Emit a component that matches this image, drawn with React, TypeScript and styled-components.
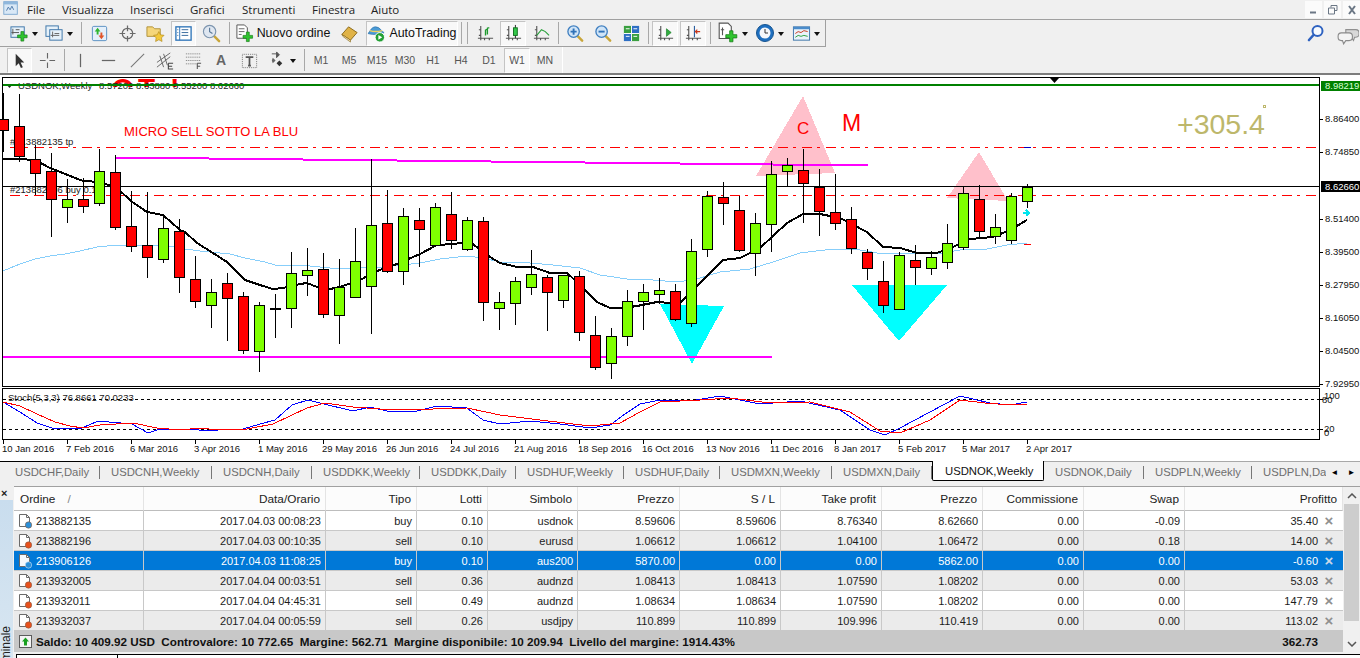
import React from "react";
import styled, { createGlobalStyle } from "styled-components";

const UI = `"Liberation Sans", Arial, sans-serif`;

const GlobalStyle = createGlobalStyle`
  html, body { margin: 0; padding: 0; background: #f0f0f0; }
  body { font-family: ${UI}; font-size: 11px; color: #1c1c1c; overflow: hidden; }
`;

const Page = styled.div`
  width: 1360px;
  height: 658px;
  display: flex;
  flex-direction: column;
  overflow: hidden;
  background: #f0f0f0;
`;

/* ---------- menu ---------- */
const MenuBar = styled.div`
  height: 19px;
  flex: none;
  display: flex;
  align-items: center;
  border-bottom: 1px solid #a0a0a0;
  padding-left: 2px;
  font-family: "Open Sans", sans-serif;
  font-size: 11.5px;
`;
const MenuItem = styled.span<{ $w: number }>`
  width: ${(p) => p.$w}px;
  color: #222;
  white-space: nowrap;
`;
const WindowButtons = styled.div`
  margin-left: auto;
  display: flex;
  gap: 2px;
  align-items: center;
`;
const WindowButton = styled.div`
  width: 17px;
  height: 17px;
  background: #fbfbfb;
  display: flex;
  align-items: center;
  justify-content: center;
`;

/* ---------- toolbars ---------- */
const ToolRow = styled.div<{ $thick?: boolean }>`
  height: ${(p) => (p.$thick ? 26 : 27)}px;
  flex: none;
  display: flex;
  justify-content: space-between;
  border-bottom: ${(p) => (p.$thick ? "2px solid #7d7d7d" : "none")};
`;
const ToolGroup = styled.div<{ $w: number; $strong?: boolean }>`
  width: ${(p) => p.$w}px;
  display: flex;
  align-items: center;
  padding-left: 6px;
  box-sizing: border-box;
  border-right: 1px solid ${(p) => (p.$strong ? "#a0a0a0" : "#fff")};
  border-bottom: ${(p) => (p.$strong ? "1px solid #a0a0a0" : "none")};
`;
const ToolButton = styled.div<{ $w: number; $on?: boolean }>`
  width: ${(p) => p.$w}px;
  height: 25px;
  flex: none;
  box-sizing: border-box;
  display: flex;
  align-items: center;
  justify-content: center;
  gap: 3px;
  color: #111;
  font-size: 12.4px;
  ${(p) =>
    p.$on
      ? `border: 1px solid #c4c4c4; border-right-color: #fff; border-bottom-color: #fff; background: #f8f8f8; margin: 0 1px; width: ${p.$w - 2}px;`
      : ""}
`;
const PeriodButton = styled(ToolButton)`
  font-size: 10.5px;
  color: #555;
`;
const LetterButton = styled(ToolButton)`
  font-size: 14px;
  font-weight: 700;
  color: #666;
`;
const ToolSep = styled.div<{ $w: number }>`
  width: ${(p) => p.$w}px;
  flex: none;
  height: 22px;
  display: flex;
  justify-content: center;
  &::before {
    content: "";
    width: 1px;
    background: #a8a8a8;
  }
`;
const Caret = styled.span`
  width: 0;
  height: 0;
  border: 3px solid transparent;
  border-top: 4px solid #111;
  margin-top: 4px;
`;
const RightIcons = styled.div`
  display: flex;
  gap: 11px;
  align-items: center;
  padding-right: 1px;
`;

/* ---------- chart ---------- */
const ChartSvg = styled.svg`
  display: block;
  flex: none;
  width: 1360px;
  height: 386px;
  background: #fff;
  font-family: ${UI};
  font-size: 9.5px;
`;

type Candle = [number, number, number, number, "r" | "g" | "d"];
const CANDLES: Candle[] = [
  [93, 119, 130, 152, "r"], [94, 126, 156, 162, "r"], [145, 159, 173, 195, "r"], [153, 171, 199, 237, "r"],
  [179, 199, 207, 223, "g"], [178, 199, 206, 213, "r"], [149, 171, 203, 206, "g"], [155, 172, 227, 230, "r"],
  [191, 226, 246, 252, "r"], [192, 245, 257, 278, "r"], [215, 228, 259, 263, "g"], [219, 231, 277, 293, "r"],
  [256, 279, 301, 308, "r"], [279, 292, 305, 328, "g"], [273, 283, 298, 341, "r"], [292, 296, 350, 354, "r"],
  [302, 305, 351, 372, "g"], [294, 308, 308, 338, "d"], [252, 273, 308, 328, "g"], [248, 270, 275, 296, "g"],
  [253, 269, 314, 318, "r"], [259, 287, 315, 344, "g"], [228, 261, 297, 298, "g"], [159, 225, 286, 334, "g"],
  [190, 223, 271, 273, "r"], [208, 216, 271, 285, "g"], [208, 220, 229, 267, "r"], [203, 207, 245, 245, "g"],
  [192, 214, 240, 249, "r"], [217, 220, 249, 251, "g"], [217, 221, 302, 321, "r"], [292, 302, 308, 330, "g"],
  [277, 281, 303, 325, "g"], [250, 274, 287, 295, "g"], [275, 277, 292, 331, "r"], [275, 275, 300, 308, "g"],
  [271, 276, 332, 341, "r"], [316, 335, 367, 370, "r"], [328, 336, 363, 379, "g"], [290, 301, 336, 346, "g"],
  [284, 292, 301, 330, "g"], [278, 290, 294, 304, "g"], [284, 291, 319, 321, "r"], [239, 251, 323, 327, "g"],
  [191, 196, 249, 257, "g"], [182, 197, 203, 225, "r"], [196, 210, 250, 252, "r"], [213, 223, 253, 276, "g"],
  [161, 174, 224, 252, "g"], [158, 165, 171, 186, "g"], [149, 170, 183, 223, "r"], [169, 187, 211, 236, "r"],
  [174, 212, 223, 230, "r"], [207, 219, 248, 254, "r"], [249, 252, 268, 280, "r"], [261, 281, 305, 313, "r"],
  [252, 255, 309, 309, "g"], [245, 260, 267, 285, "r"], [251, 257, 268, 275, "g"], [224, 243, 262, 269, "g"],
  [187, 193, 247, 250, "g"], [185, 199, 231, 238, "r"], [214, 227, 236, 244, "g"], [193, 196, 240, 244, "g"],
  [184, 187, 201, 208, "g"],
];
const MA_FAST =
  "3,159 19,159 35,160 50,168 83,181 100,182 117,188 131,201 147,212 163,215 180,230 185,232 197,243 213,253 227,262 245,280 263,286 273,289 283,288 300,284 307,283 317,287 330,289 340,287 360,280 377,271 397,264 420,254 437,245 453,244 470,242 490,257 500,263 517,267 533,267 550,273 567,273 577,282 597,302 610,308 623,308 637,306 657,302 670,303 680,303 693,290 723,260 740,258 760,248 787,223 803,214 820,214 840,218 867,232 883,247 900,248 917,253 937,253 953,247 970,239 993,237 1010,230 1027,220";
const MA_SLOW =
  "3,271 10,268 20,264 35,259 50,256 65,254 80,251 97,247 107,246 150,245 163,245 185,249 200,251 230,254 245,258 265,262 275,265 300,265 340,269 383,267 403,265 420,263 440,259 467,256 483,258 500,262 530,263 553,265 580,268 600,275 627,279 653,280 677,282 697,279 720,272 750,269 773,262 800,253 833,249 860,250 883,254 917,253 937,254 960,250 987,249 1007,245 1027,243";
const STOCH_BLUE =
  "3,402 20,412 37,423 52,428 82,428 98,421 132,424 148,433 160,429 187,429 210,431 227,429 243,429 260,424 275,420 292,405 308,400 320,403 353,411 370,407 387,411 417,411 437,406 467,408 483,420 500,424 530,421 560,424 590,428 610,425 625,414 640,404 660,400 690,401 720,396 760,404 800,401 840,410 870,430 885,435 900,428 930,412 960,396 990,403 1010,405 1027,402";
const STOCH_RED =
  "3,402 20,406 37,414 55,422 70,426 83,428 100,425 133,423 157,428 180,430 200,428 217,430 247,429 273,424 307,408 325,403 353,407 380,409 407,410 433,409 467,408 500,415 540,420 590,426 620,423 640,412 660,402 700,400 730,398 770,403 810,402 850,412 880,431 900,433 930,420 960,400 985,403 1010,405 1027,404";
const PRICE_TICKS: [string, number][] = [
  ["8.86400", 119], ["8.74850", 152], ["8.51400", 219], ["8.39500", 252],
  ["8.27950", 285], ["8.16050", 318], ["8.04500", 351], ["7.92950", 384],
];
const DATES = [
  "10 Jan 2016", "7 Feb 2016", "6 Mar 2016", "3 Apr 2016", "1 May 2016", "29 May 2016", "26 Jun 2016", "24 Jul 2016",
  "21 Aug 2016", "18 Sep 2016", "16 Oct 2016", "13 Nov 2016", "11 Dec 2016", "8 Jan 2017", "5 Feb 2017", "5 Mar 2017", "2 Apr 2017",
];
const MAGENTA_STEPS: [number, number, number][] = [
  [115, 209, 157], [209, 303, 158], [303, 397, 159], [397, 491, 160], [491, 585, 161], [585, 680, 162], [680, 773, 163], [773, 868, 164],
];

const Chart = () => (
  <ChartSvg viewBox="0 75 1360 386">
    <defs>
      <clipPath id="topCut">
        <rect x="100" y="77" width="100" height="10" />
      </clipPath>
    </defs>
    <rect x="2.5" y="77.5" width="1317" height="309" fill="#fff" stroke="#000" />
    <rect x="2.5" y="388.5" width="1317" height="51" fill="#fff" stroke="#000" />

    <g shapeRendering="crispEdges">
      <polygon points="660,304 724,306 692,364" fill="#00ffff" />
      <polygon points="852,285 947,285 899,341" fill="#00ffff" />
      <polygon points="756,176 803,96 835,173" fill="#ffc0cb" />
      <polygon points="947,198 979,152 1008,201" fill="#ffc0cb" />
    </g>

    <text x="112 138 170" y="98" fontSize="28" fontWeight="700" fill="#f00" clipPath="url(#topCut)">OT!</text>
    <text x="124" y="136" fontSize="13" fill="#f00">MICRO SELL SOTTO LA BLU</text>
    <text x="797" y="134" fontSize="17" fill="#f00">C</text>
    <text x="842" y="131" fontSize="23" fill="#f00">M</text>
    <text x="1177" y="134" fontSize="28.5" fill="#bdb76b">+305.4</text>
    <rect x="1263.5" y="105.5" width="2" height="2" fill="none" stroke="#bdb76b" />
    <text x="18" y="89" fill="#222">USDNOK,Weekly</text>
    <text x="99" y="89" fill="#222">8.57202 8.63880 8.55200 8.62660</text>
    <polygon points="6,84 13,84 9.5,88" fill="#222" />
    <text x="10" y="145" fill="#222">#213882135 tp</text>
    <text x="10" y="193" fill="#222">#213882196 buy 0.10</text>
    <polygon points="1050,78 1059,78 1054.5,83" fill="#000" />

    <g shapeRendering="crispEdges" fill="none">
      <line x1="3" x2="1319" y1="85" y2="85" stroke="#008000" strokeWidth="2" />
      <line x1="10" x2="1319" y1="147.5" y2="147.5" stroke="#f00" strokeDasharray="10 5 3 6" />
      <line x1="10" x2="1319" y1="195.5" y2="195.5" stroke="#f00" strokeDasharray="10 5 3 6" />
      <line x1="3" x2="1319" y1="186.5" y2="186.5" stroke="#000" />
      {MAGENTA_STEPS.map(([a, b, y]) => (
        <line key={a} x1={a} x2={b} y1={y + 0.5} y2={y + 0.5} stroke="#ff00ff" strokeWidth="2" />
      ))}
      <line x1="3" x2="772" y1="357" y2="357" stroke="#ff00ff" strokeWidth="2" />
      <polyline points={MA_SLOW} stroke="#87cefa" />
      <polyline points={MA_FAST} stroke="#000" strokeWidth="2" />
      <line x1="1024" x2="1031" y1="147.5" y2="147.5" stroke="#0000c8" />
      <line x1="1024" x2="1031" y1="244.5" y2="244.5" stroke="#f00" />
      {CANDLES.map(([hi, top, bot, lo, kind], i) => {
        const x = 3 + 16 * i;
        return (
          <g key={i}>
            <line x1={x + 0.5} x2={x + 0.5} y1={hi} y2={lo} stroke="#000" />
            {kind === "d" ? (
              <line x1={x - 5} x2={x + 6} y1={top + 0.5} y2={top + 0.5} stroke="#000" strokeWidth="2" />
            ) : (
              <rect x={x - 4.5} y={top + 0.5} width={10} height={bot - top} fill={kind === "r" ? "#f00" : "#7fff00"} stroke="#000" />
            )}
          </g>
        );
      })}
      <path d="M1023 213h5M1026 210l3 3-3 3" stroke="#00e5ee" strokeWidth="2" />

      <line x1="3" x2="1319" y1="399.5" y2="399.5" stroke="#000" strokeDasharray="3 3" />
      <line x1="3" x2="1319" y1="429.5" y2="429.5" stroke="#000" strokeDasharray="3 3" />
      <polyline points={STOCH_BLUE} stroke="#0000ff" />
      <polyline points={STOCH_RED} stroke="#f00" />
      {PRICE_TICKS.map(([, y]) => (
        <line key={y} x1="1320" x2="1323" y1={y + 0.5} y2={y + 0.5} stroke="#000" />
      ))}
      <line x1="1320" x2="1323" y1="399.5" y2="399.5" stroke="#000" />
      <line x1="1320" x2="1323" y1="429.5" y2="429.5" stroke="#000" />
      {DATES.map((d, i) => (
        <line key={d} x1={3.5 + 64 * i} x2={3.5 + 64 * i} y1="440" y2="444" stroke="#000" />
      ))}
      <rect x="1321" y="81" width="39" height="10" fill="#008000" />
      <rect x="1321" y="181" width="39" height="11" fill="#000" />
    </g>

    <text x="8" y="401" fill="#222">Stoch(5,3,3) 76.8661 70.0233</text>
    {PRICE_TICKS.map(([label, y]) => (
      <text key={label} x="1325" y={y + 3} fill="#111">{label}</text>
    ))}
    <text x="1325" y="89" fill="#d8ffd8">8.98219</text>
    <text x="1325" y="190" fill="#fff">8.62660</text>
    <text x="1324" y="399" fill="#111">100</text>
    <text x="1322" y="403" fill="#111">80</text>
    <text x="1324" y="432" fill="#111">20</text>
    <text x="1324" y="436" fill="#111">0</text>
    {DATES.map((d, i) => (
      <text key={d} x={2 + 64 * i} y="452" fill="#111">{d}</text>
    ))}
  </ChartSvg>
);

/* ---------- tabs ---------- */
const TabStrip = styled.div`
  height: 22px;
  flex: none;
  box-sizing: border-box;
  padding-left: 4px;
  display: flex;
  align-items: stretch;
  font-size: 11.3px;
  background: linear-gradient(90deg, #000 1044px, #a8a8a8 1044px) no-repeat top / 100% 1px, #f0f0f0;
  overflow: hidden;
`;
const Tab = styled.div<{ $w: number; $active?: boolean; $end?: boolean }>`
  width: ${(p) => p.$w}px;
  flex: none;
  box-sizing: border-box;
  padding-left: ${(p) => (p.$active ? 12 : 11)}px;
  display: flex;
  align-items: center;
  white-space: nowrap;
  overflow: hidden;
  color: ${(p) => (p.$active ? "#111" : "#6e6e6e")};
  margin-bottom: 2px;
  ${(p) =>
    p.$active
      ? "background:#fff;border:1px solid #000;border-top:none;border-radius:0 0 2px 2px;"
      : `margin-top:2px;${p.$end ? "" : "background: linear-gradient(#777,#777) no-repeat right center / 1px 13px;"}`}
`;
const TabArrows = styled.div`
  flex: 1;
  display: flex;
  justify-content: space-around;
  align-items: center;
  font-size: 8px;
  color: #000;
  margin: 2px 0;
`;

const TABS: [string, number][] = [
  ["USDCHF,Daily", 96], ["USDCNH,Weekly", 112], ["USDCNH,Daily", 100], ["USDDKK,Weekly", 108], ["USDDKK,Daily", 96],
  ["USDHUF,Weekly", 108], ["USDHUF,Daily", 96], ["USDMXN,Weekly", 112], ["USDMXN,Daily", 100],
];

/* ---------- terminal ---------- */
const Terminal = styled.div`
  flex: 1;
  display: flex;
  padding-top: 3px;
  min-height: 0;
`;
const Rail = styled.div`
  width: 13px;
  flex: none;
  display: flex;
  flex-direction: column;
  overflow: hidden;
`;
const RailClose = styled.div`
  height: 14px;
  flex: none;
  font-size: 11px;
  font-weight: 700;
  line-height: 14px;
  padding-left: 1px;
`;
const RailBody = styled.div`
  flex: 1;
  background: linear-gradient(#c9ddee, #d8e6f1);
  padding-top: 126px;
  overflow: hidden;
`;
const RailLabel = styled.div`
  writing-mode: vertical-rl;
  transform: rotate(180deg);
  font-size: 12px;
  color: #222;
  line-height: 13px;
`;
const TableArea = styled.div`
  flex: 1;
  display: flex;
  flex-direction: column;
  min-width: 0;
`;
const TableWrap = styled.div`
  display: flex;
  border-top: 1px solid #a0a0a0;
  margin-left: 1px;
  height: 166px;
  flex: none;
  box-sizing: border-box;
`;
const Table = styled.div`
  width: 1329px;
  display: grid;
  grid-template-columns: 130px 182px 91px 71px 90px 102px 101px 101px 101px 101px 101px 158px;
  grid-template-rows: 24px repeat(6, 20px) 21px;
  background: #fff;
`;
const HeadCell = styled.div<{ $left?: boolean }>`
  box-sizing: border-box;
  display: flex;
  align-items: center;
  justify-content: ${(p) => (p.$left ? "flex-start" : "flex-end")};
  padding: 0 5px 0 6px;
  font-size: 11.8px;
  color: #222;
  background: #fcfcfc;
  border-right: 1px solid #e4e4e4;
  border-bottom: 1px solid #bdbdbd;
`;
const SortMark = styled.span`
  margin-left: 12px;
  color: #888;
`;
const Cell = styled.div<{ $tone: Tone; $first?: boolean; $last?: boolean }>`
  box-sizing: border-box;
  display: flex;
  align-items: center;
  justify-content: ${(p) => (p.$first ? "flex-start" : "flex-end")};
  gap: 3px;
  padding: 0 ${(p) => (p.$first ? 0 : p.$last ? 6 : 4)}px 0 ${(p) => (p.$first ? 3 : 0)}px;
  font-size: 11px;
  white-space: nowrap;
  background: ${(p) => (p.$tone === "sel" ? "#0078d7" : p.$tone === "alt" ? "#ebebeb" : "#fff")};
  color: ${(p) => (p.$tone === "sel" ? "#fff" : "#1c1c1c")};
  border-right: 1px solid #c8c8c8;
  border-bottom: 1px solid #c8c8c8;
  ${(p) => (p.$last ? "border-right: none;" : "")}
`;
const CloseMark = styled.span<{ $tone: Tone }>`
  width: 16px;
  text-align: center;
  font-weight: 700;
  font-size: 15px;
  line-height: 15px;
  color: ${(p) => (p.$tone === "sel" ? "#c9d9e8" : "#8f8f8f")};
`;
const BalanceRow = styled.div`
  grid-column: 1 / -1;
  background: #c8c8c8;
  display: flex;
  align-items: center;
  padding: 0 25px 0 5px;
  font-size: 11.7px;
  font-weight: 700;
  color: #111;
  white-space: pre;
  gap: 4px;
`;
const BalanceTotal = styled.span`
  margin-left: auto;
`;
const Scrollbar = styled.div`
  width: 17px;
  flex: none;
  display: flex;
  flex-direction: column;
  align-items: center;
  background: #f0f0f0;
`;
const ScrollEnd = styled.div`
  height: 17px;
  flex: none;
  display: flex;
  align-items: center;
  justify-content: center;
`;
const ScrollThumb = styled.div`
  width: 15px;
  height: 117px;
  flex: none;
  background: #cdcdcd;
`;
const ScrollGap = styled.div`
  flex: 1;
`;
const Footer = styled.div`
  flex: 1;
  display: flex;
  align-items: flex-end;
`;
const FooterTab = styled.div`
  width: 102px;
  margin-left: 3px;
  height: 4px;
  background: #fff;
  border: 1px solid #000;
  border-bottom: none;
  box-sizing: border-box;
`;
const FooterLine = styled.div`
  flex: 1;
  height: 3px;
  border-top: 1px solid #000;
  background: #fff;
`;

type Tone = "plain" | "alt" | "sel";
const HEADERS = ["Ordine", "Data/Orario", "Tipo", "Lotti", "Simbolo", "Prezzo", "S / L", "Take profit", "Prezzo", "Commissione", "Swap", "Profitto"];
const ROWS: { tone: Tone; cells: string[] }[] = [
  { tone: "plain", cells: ["213882135", "2017.04.03 00:08:23", "buy", "0.10", "usdnok", "8.59606", "8.59606", "8.76340", "8.62660", "0.00", "-0.09", "35.40"] },
  { tone: "alt", cells: ["213882196", "2017.04.03 00:10:35", "sell", "0.10", "eurusd", "1.06612", "1.06612", "1.04100", "1.06472", "0.00", "0.18", "14.00"] },
  { tone: "sel", cells: ["213906126", "2017.04.03 11:08:25", "buy", "0.10", "aus200", "5870.00", "0.00", "0.00", "5862.00", "0.00", "0.00", "-0.60"] },
  { tone: "alt", cells: ["213932005", "2017.04.04 00:03:51", "sell", "0.36", "audnzd", "1.08413", "1.08413", "1.07590", "1.08202", "0.00", "0.00", "53.03"] },
  { tone: "plain", cells: ["213932011", "2017.04.04 04:45:31", "sell", "0.49", "audnzd", "1.08634", "1.08634", "1.07590", "1.08202", "0.00", "0.00", "147.79"] },
  { tone: "alt", cells: ["213932037", "2017.04.04 00:05:59", "sell", "0.26", "usdjpy", "110.899", "110.899", "109.996", "110.419", "0.00", "0.00", "113.02"] },
];

/* ---------- icons ---------- */
const IconSvg = styled.svg`
  flex: none;
`;
type IconProps = { children: React.ReactNode; size?: number };
const Ico = ({ children, size = 19 }: IconProps) => (
  <IconSvg width={size} height={size} viewBox="0 0 20 20" fill="none">
    {children}
  </IconSvg>
);
const GreenPlus = ({ x = 10, y = 10 }: { x?: number; y?: number }) => (
  <path
    transform={`translate(${x} ${y})`}
    d="M3.5 0h3v3.5H10v3H6.5V10h-3V6.5H0v-3h3.5z"
    fill="#2fc42f"
    stroke="#167a16"
    strokeWidth=".7"
  />
);
const MiniAxes = () => (
  <path d="M5 2v15M2 15h16M3 12h2M3 6h2M9 15v2M14 15v2" stroke="#555" strokeWidth="1.2" />
);
const Magnifier = ({ sign }: { sign: "+" | "-" }) => (
  <Ico>
    <path d="M11.5 12l5.5 5.5" stroke="#c9a63a" strokeWidth="2.6" strokeLinecap="round" />
    <circle cx="8" cy="8" r="6" fill="#cfe4f7" stroke="#3f7fc0" strokeWidth="1.4" />
    <path d={sign === "+" ? "M4.8 8h6.4M8 4.8v6.4" : "M4.8 8h6.4"} stroke="#2f72b8" strokeWidth="2" />
  </Ico>
);

const icons = {
  newChart: (
    <Ico>
      <rect x="1" y="3" width="14" height="11" fill="#e6f1f9" stroke="#3c74a8" />
      <path d="M3 5v6M1.5 9h8M6 6h4" stroke="#555" />
      <GreenPlus x={8} y={8} />
    </Ico>
  ),
  profiles: (
    <Ico>
      <rect x="1" y="2" width="13" height="11" fill="#e6f1f9" stroke="#3c74a8" />
      <rect x="5" y="6" width="13" height="11" fill="#e6f1f9" stroke="#3c74a8" />
      <path d="M8 8v6M6 12h9M10 10h5" stroke="#666" />
    </Ico>
  ),
  market: (
    <Ico>
      <rect x="2.5" y="2.5" width="15" height="15" rx="1.5" fill="#e4effa" stroke="#5a8fc2" />
      <path d="M8 4l3 4H9v3H7V8H5z" fill="#2fb52f" />
      <path d="M12 16l-3-4h2V9h2v3h2z" fill="#e0552a" />
    </Ico>
  ),
  crosshair: (
    <Ico>
      <circle cx="10" cy="10" r="5.5" stroke="#6a6a6a" strokeWidth="1.3" />
      <path d="M10 1.5v6M10 12.5v6M1.5 10h6M12.5 10h6" stroke="#6a6a6a" strokeWidth="1.3" />
    </Ico>
  ),
  favorites: (
    <Ico>
      <path d="M1 3h6l2 2h6v8H1z" fill="#f5d67a" stroke="#b0913a" />
      <path d="M13.5 8l1.7 3.4 3.8.5-2.7 2.7.6 3.8-3.4-1.8-3.4 1.8.6-3.8L8 11.9l3.8-.5z" fill="#f4c93a" stroke="#b08a1e" strokeWidth=".7" />
    </Ico>
  ),
  navigator: (
    <Ico>
      <rect x="2" y="3" width="16" height="14" fill="#fff" stroke="#2c73b8" strokeWidth="1.4" />
      <path d="M6 3v14" stroke="#2c73b8" />
      <path d="M3.5 6h1M3.5 9h1M3.5 12h1M8 6h7M8 9h7M8 12h7" stroke="#35689c" />
    </Ico>
  ),
  tester: (
    <Ico>
      <path d="M12 12l6 6" stroke="#c9a63a" strokeWidth="2.6" strokeLinecap="round" />
      <circle cx="8" cy="8" r="6.5" fill="#dfe7f1" stroke="#7c94ae" strokeWidth="1.2" />
      <path d="M8 4v4l3 2" stroke="#5a7898" strokeWidth="1.2" />
    </Ico>
  ),
  order: (
    <Ico>
      <path d="M2 1h8l3 3v11H2z" fill="#fff" stroke="#555" />
      <path d="M4 5h6M4 8h6M4 11h3" stroke="#666" />
      <GreenPlus x={8.5} y={8.5} />
    </Ico>
  ),
  book: (
    <Ico>
      <path d="M2 11l7-8 9 6-7 8z" fill="#e0b347" stroke="#8b6a1c" />
      <path d="M2 11l1 2 8 6 0-2z" fill="#f7e7b5" stroke="#8b6a1c" strokeWidth=".7" />
    </Ico>
  ),
  auto: (
    <Ico>
      <path d="M1 10c2-1 3-7 8-7s6 5 9 6c-3 2-5 2-8 2s-6 0-9-1z" fill="#4a9bd6" stroke="#2a6ea8" strokeWidth=".7" />
      <path d="M3 7c3 1 9 1 13 0" stroke="#f0d060" strokeWidth="1.4" />
      <circle cx="13.5" cy="14" r="5" fill="#23a035" stroke="#fff" />
      <path d="M12 11.5l4 2.5-4 2.5z" fill="#fff" />
    </Ico>
  ),
  bars: (
    <Ico>
      <MiniAxes />
      <path d="M10 12V6M10 6h2M12 11V4M12 4h2" stroke="#1e9a2e" strokeWidth="1.4" />
    </Ico>
  ),
  candles: (
    <Ico>
      <MiniAxes />
      <path d="M12 1v14" stroke="#222" />
      <rect x="10" y="4" width="4" height="8" fill="#33c84a" stroke="#136f20" />
    </Ico>
  ),
  line: (
    <Ico>
      <MiniAxes />
      <path d="M5 12l5-6 4 2 4 4" stroke="#2aa03c" strokeWidth="1.2" />
    </Ico>
  ),
  tile: (
    <Ico>
      <rect x="2" y="2" width="8" height="8" fill="#3aa040" />
      <rect x="10" y="2" width="8" height="8" fill="#2e6fc4" />
      <rect x="2" y="10" width="8" height="8" fill="#2e6fc4" />
      <rect x="10" y="10" width="8" height="8" fill="#3aa040" />
      <path d="M4 5h4M12 5h4M4 13h4M12 13h4" stroke="#fff" />
      <path d="M2 10h16M10 2v16" stroke="#fff" />
    </Ico>
  ),
  scroll: (
    <Ico>
      <MiniAxes />
      <path d="M11 5l5 4-5 4z" fill="#2fae3e" stroke="#1b7a29" strokeWidth=".7" />
    </Ico>
  ),
  shift: (
    <Ico>
      <MiniAxes />
      <path d="M11 2v12" stroke="#2d5f9f" strokeWidth="1.2" />
      <path d="M17 8h-5M14 6l-2 2 2 2" stroke="#c8381e" strokeWidth="1.2" />
    </Ico>
  ),
  indicators: (
    <Ico size={22}>
      <path d="M2 1h8l3 3v11H2z" fill="#fff" stroke="#555" />
      <path d="M5 5v7M3.5 7h3" stroke="#555" />
      <GreenPlus x={8} y={8} />
    </Ico>
  ),
  clock: (
    <Ico size={20}>
      <circle cx="10" cy="10" r="8.5" fill="#1e6fc0" stroke="#17548f" />
      <circle cx="10" cy="10" r="5.5" fill="#f4f7fb" />
      <path d="M10 6v4h3" stroke="#333" />
    </Ico>
  ),
  templates: (
    <Ico>
      <rect x="1.5" y="3" width="17" height="14" fill="#eaf2fa" stroke="#3c74a8" />
      <rect x="1.5" y="3" width="17" height="2.5" fill="#4a8ccb" />
      <path d="M3.5 10l3-2 3 1 3-2 4 1" stroke="#c8381e" />
      <path d="M3.5 14l3-2 3 1 3-1 4 1" stroke="#2aa03c" />
    </Ico>
  ),
  cursor: (
    <Ico>
      <path d="M6 3v13l3.2-3 2.3 5 2-1-2.3-4.8H15z" fill="#333" />
    </Ico>
  ),
  cross2: (
    <Ico>
      <path d="M10 2v6M10 12v6M2 10h6M12 10h6" stroke="#666" strokeWidth="1.2" />
    </Ico>
  ),
  vline: (
    <Ico>
      <path d="M10 3v14" stroke="#666" strokeWidth="1.3" />
    </Ico>
  ),
  hline: (
    <Ico>
      <path d="M3 10h14" stroke="#666" strokeWidth="1.3" />
    </Ico>
  ),
  trend: (
    <Ico>
      <path d="M3 17L17 3" stroke="#777" strokeWidth="1.1" />
    </Ico>
  ),
  channel: (
    <Ico>
      <path d="M1 12L15 2M1 17L15 6M4 5l4 12M8 3l4 12" stroke="#666" />
      <path d="M13 13h5M13 13v6h5M13 16h4" stroke="#444" strokeWidth="1.1" />
    </Ico>
  ),
  fib: (
    <Ico>
      <path d="M2 3h15M2 6.5h15M2 10h15M2 13.5h11" stroke="#777" strokeDasharray="1 1" />
      <path d="M14 13h4M14 13v6M14 16h3" stroke="#555" strokeWidth="1.1" />
    </Ico>
  ),
  textBox: (
    <Ico>
      <rect x="2.5" y="3.5" width="15" height="14" stroke="#777" strokeDasharray="1 1" />
      <path d="M6 6.5h8M10 6.5v9M8.5 15.5h3" stroke="#555" strokeWidth="1.8" />
    </Ico>
  ),
  arrows: (
    <Ico>
      <path d="M4 3h5M9 1l3 3-3 3z" fill="#555" stroke="#555" />
      <path d="M9 13l3-3 3 3-3 3z" fill="#333" />
      <path d="M5 7l3 3-3 3-1-3z" fill="#666" />
    </Ico>
  ),
  search: (
    <Ico size={20}>
      <circle cx="11.5" cy="7" r="5" stroke="#2e62c0" strokeWidth="2" fill="#f6faff" />
      <path d="M7.5 11L3 16" stroke="#2e62c0" strokeWidth="2.6" strokeLinecap="round" />
    </Ico>
  ),
  chat: (
    <Ico size={22}>
      <path d="M8 6h9a3 3 0 013 3v1a3 3 0 01-3 3h-1l-1 3-2-3H8z" fill="#d8d8d8" stroke="#909090" />
      <path d="M4 9h7a3 3 0 013 3v1a3 3 0 01-3 3H8l-2 3-1-3H4a3 3 0 01-3-3v-1a3 3 0 013-3z" fill="#f4f4f4" stroke="#8a8a8a" />
    </Ico>
  ),
};

const AppIcon = () => (
  <Ico size={18}>
    <rect x="2" y="3" width="15" height="14" fill="#d9e8f6" stroke="#7aa6cf" />
    <rect x="2" y="3" width="15" height="3" fill="#8fb7dc" />
    <path d="M5 13l2-4 2 3 2-4 2 4" stroke="#4a76a8" />
  </Ico>
);

const OrderDoc = ({ tone, color }: { tone: Tone; color: string }) => (
  <IconSvg width="16" height="16" viewBox="0 0 16 16" fill="none">
    <path d="M2.5 1.5h7l3 3v9h-10z" fill={tone === "sel" ? "#f4f8fc" : "#fff"} stroke="#6b6b6b" />
    <path d="M9.5 1.5v3h3" stroke="#6b6b6b" />
    <circle cx="11.5" cy="12" r="3.2" fill={color} stroke={tone === "sel" ? "#cfe4f7" : "#8a5a40"} strokeWidth=".6" />
  </IconSvg>
);

const App = () => (
  <Page>
    <GlobalStyle />
    <MenuBar>
      <MenuItem $w={25}><AppIcon /></MenuItem>
      <MenuItem $w={35}>File</MenuItem>
      <MenuItem $w={68}>Visualizza</MenuItem>
      <MenuItem $w={60}>Inserisci</MenuItem>
      <MenuItem $w={52}>Grafici</MenuItem>
      <MenuItem $w={70}>Strumenti</MenuItem>
      <MenuItem $w={59}>Finestra</MenuItem>
      <MenuItem $w={40}>Aiuto</MenuItem>
      <WindowButtons>
        <WindowButton>
          <svg width="9" height="9" viewBox="0 0 9 9"><path d="M1 7.5h6" stroke="#6b7785" strokeWidth="2" /></svg>
        </WindowButton>
        <WindowButton>
          <svg width="10" height="10" viewBox="0 0 10 10" fill="none"><path d="M3 2.5V.5h6v5H7M.5 3h6v6h-6z" stroke="#6b7785" /></svg>
        </WindowButton>
        <WindowButton>
          <svg width="10" height="10" viewBox="0 0 10 10"><path d="M2 1l6 8M8 1L2 9" stroke="#6b7785" strokeWidth="2" /></svg>
        </WindowButton>
      </WindowButtons>
    </MenuBar>

    <ToolRow>
      <ToolGroup $w={826} $strong>
        <ToolButton $w={35}>{icons.newChart}<Caret /></ToolButton>
        <ToolButton $w={36}>{icons.profiles}<Caret /></ToolButton>
        <ToolSep $w={8} />
        <ToolButton $w={28}>{icons.market}</ToolButton>
        <ToolButton $w={28}>{icons.crosshair}</ToolButton>
        <ToolButton $w={29}>{icons.favorites}</ToolButton>
        <ToolButton $w={27} $on>{icons.navigator}</ToolButton>
        <ToolButton $w={29}>{icons.tester}</ToolButton>
        <ToolSep $w={6} />
        <ToolButton $w={101}>{icons.order}Nuovo ordine</ToolButton>
        <ToolButton $w={32}>{icons.book}</ToolButton>
        <ToolButton $w={94} $on>{icons.auto}AutoTrading</ToolButton>
        <ToolSep $w={5} />
        <ToolSep $w={7} />
        <ToolButton $w={28}>{icons.bars}</ToolButton>
        <ToolButton $w={28} $on>{icons.candles}</ToolButton>
        <ToolButton $w={28}>{icons.line}</ToolButton>
        <ToolSep $w={6} />
        <ToolButton $w={28}><Magnifier sign="+" /></ToolButton>
        <ToolButton $w={28}><Magnifier sign="-" /></ToolButton>
        <ToolButton $w={28}>{icons.tile}</ToolButton>
        <ToolSep $w={6} />
        <ToolButton $w={28} $on>{icons.scroll}</ToolButton>
        <ToolButton $w={28} $on>{icons.shift}</ToolButton>
        <ToolSep $w={6} />
        <ToolButton $w={38}>{icons.indicators}<Caret /></ToolButton>
        <ToolButton $w={36}>{icons.clock}<Caret /></ToolButton>
        <ToolButton $w={38}>{icons.templates}<Caret /></ToolButton>
      </ToolGroup>
      <RightIcons>
        {icons.search}
        {icons.chat}
      </RightIcons>
    </ToolRow>

    <ToolRow $thick>
      <ToolGroup $w={563}>
        <ToolButton $w={27} $on>{icons.cursor}</ToolButton>
        <ToolButton $w={28}>{icons.cross2}</ToolButton>
        <ToolSep $w={6} />
        <ToolButton $w={27}>{icons.vline}</ToolButton>
        <ToolButton $w={29}>{icons.hline}</ToolButton>
        <ToolButton $w={28}>{icons.trend}</ToolButton>
        <ToolButton $w={28}>{icons.channel}</ToolButton>
        <ToolButton $w={28}>{icons.fib}</ToolButton>
        <LetterButton $w={28}>A</LetterButton>
        <ToolButton $w={28}>{icons.textBox}</ToolButton>
        <ToolButton $w={38}>{icons.arrows}<Caret /></ToolButton>
        <ToolSep $w={6} />
        {["M1", "M5", "M15", "M30", "H1", "H4", "D1"].map((p) => (
          <PeriodButton $w={28} key={p}>{p}</PeriodButton>
        ))}
        <PeriodButton $w={28} $on>W1</PeriodButton>
        <PeriodButton $w={28}>MN</PeriodButton>
      </ToolGroup>
    </ToolRow>

    <Chart />

    <TabStrip>
      {TABS.map(([name, w]) => (
        <Tab $w={w} key={name}>{name}</Tab>
      ))}
      <Tab $w={112} $active>USDNOK,Weekly</Tab>
      <Tab $w={100}>USDNOK,Daily</Tab>
      <Tab $w={108}>USDPLN,Weekly</Tab>
      <Tab $w={74} $end>USDPLN,Dai</Tab>
      <TabArrows>
        <span>◄</span>
        <span>►</span>
      </TabArrows>
    </TabStrip>

    <Terminal>
      <Rail>
        <RailClose>×</RailClose>
        <RailBody>
          <RailLabel>Terminale</RailLabel>
        </RailBody>
      </Rail>
      <TableArea>
        <TableWrap>
          <Table>
            {HEADERS.map((h, i) => (
              <HeadCell key={i} $left={i === 0}>
                {h}
                {i === 0 && <SortMark>/</SortMark>}
              </HeadCell>
            ))}
            {ROWS.flatMap((r) =>
              r.cells.map((c, i) => (
                <Cell key={r.cells[0] + i} $tone={r.tone} $first={i === 0} $last={i === 11}>
                  {i === 0 && <OrderDoc tone={r.tone} color={r.cells[2] === "buy" ? "#2a8fd8" : "#e8501c"} />}
                  {c}
                  {i === 11 && <CloseMark $tone={r.tone}>×</CloseMark>}
                </Cell>
              ))
            )}
            <BalanceRow>
              <IconSvg width="13" height="13" viewBox="0 0 13 13">
                <rect x=".5" y=".5" width="12" height="12" fill="#f4f4f4" stroke="#5c5c5c" />
                <path d="M6.5 2.5L10 6.5H8v4H5v-4H3z" fill="#19a01f" />
              </IconSvg>
              {"Saldo: 10 409.92 USD  Controvalore: 10 772.65  Margine: 562.71  Margine disponibile: 10 209.94  Livello del margine: 1914.43%"}
              <BalanceTotal>362.73</BalanceTotal>
            </BalanceRow>
          </Table>
          <Scrollbar>
            <ScrollEnd>
              <svg width="10" height="6" viewBox="0 0 10 6" fill="none"><path d="M1 5l4-4 4 4" stroke="#555" strokeWidth="1.5" /></svg>
            </ScrollEnd>
            <ScrollThumb />
            <ScrollGap />
            <ScrollEnd>
              <svg width="10" height="6" viewBox="0 0 10 6" fill="none"><path d="M1 1l4 4 4-4" stroke="#555" strokeWidth="1.5" /></svg>
            </ScrollEnd>
          </Scrollbar>
        </TableWrap>
        <Footer>
          <FooterTab />
          <FooterLine />
        </Footer>
      </TableArea>
    </Terminal>
  </Page>
);

export default App;
